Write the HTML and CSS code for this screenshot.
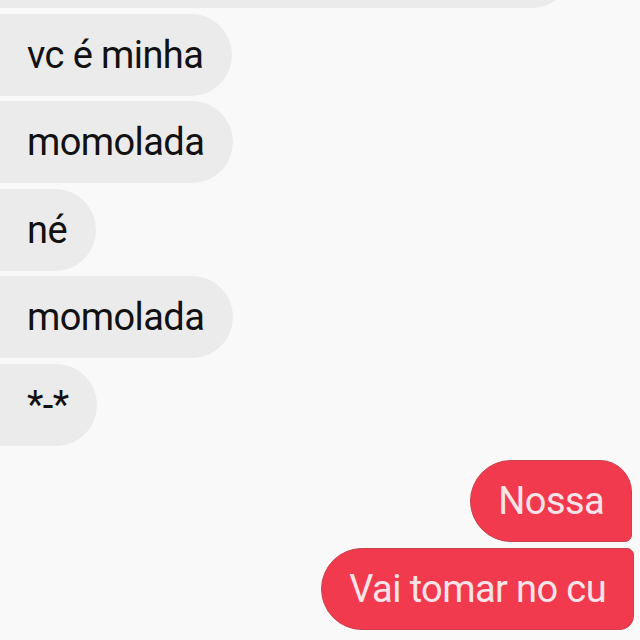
FILE: index.html
```html
<!DOCTYPE html>
<html lang="pt">
<head>
<meta charset="utf-8">
<link rel="stylesheet" href="styles.css">
</head>
<body>
<div class="chat">
  <div class="bubble in top-cut"></div>
  <div class="bubble in">vc é minha</div>
  <div class="bubble in">momolada</div>
  <div class="bubble in">né</div>
  <div class="bubble in">momolada</div>
  <div class="bubble in">*-*</div>
  <div class="bubble out first">Nossa</div>
  <div class="bubble out last">Vai tomar no cu</div>
</div>
</body>
</html>
```
FILE: styles.css
```css
html, body {
  margin: 0;
  padding: 0;
  background: #f9f9f9;
  overflow: hidden;
}
.chat {
  display: flex;
  flex-direction: column;
  gap: 5.5px;
  width: 640px;
  margin-top: -75px;
  font-family: Roboto, "Liberation Sans", sans-serif;
  font-size: 38px;
  letter-spacing: -0.6px;
}
.bubble {
  box-sizing: border-box;
  height: 82px;
  display: flex;
  align-items: center;
  line-height: 1;
}
.in {
  align-self: flex-start;
  background: #ebebeb;
  color: #111;
  padding: 0 29px 0 27px;
  border-radius: 0 41px 41px 0;
}
.top-cut {
  width: 572px;
  height: 83px;
  border-radius: 0 0 40px 0;
}
.out {
  align-self: flex-end;
  background: #f23a4e;
  color: #fbe4e8;
  border: 1.5px solid #c8414d;
  padding: 0 27px 0 27px;
}
.first {
  margin-top: 9px;
  margin-right: 8px;
  border-radius: 41px 32px 7px 41px;
}
.last {
  margin-top: 0.5px;
  margin-right: 6px;
  border-radius: 41px 7px 14px 41px;
}
```
